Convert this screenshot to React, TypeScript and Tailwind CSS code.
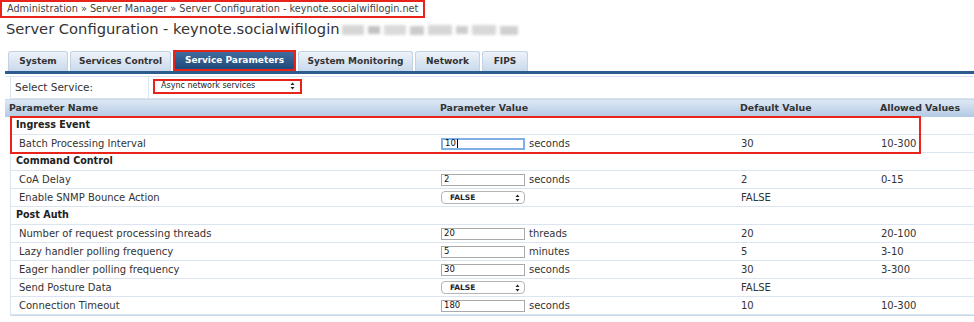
import React from 'react';

type Row =
  | { kind: 'group'; label: string }
  | { kind: 'input'; label: string; value: string; unit: string; def: string; allowed: string; focus?: boolean }
  | { kind: 'select'; label: string; value: string; def: string };

const tabs = [
  { label: 'System', w: 'w-[60px]' },
  { label: 'Services Control', w: 'w-[101px]' },
  { label: 'Service Parameters', w: 'w-[123px]' },
  { label: 'System Monitoring', w: 'w-[115px]' },
  { label: 'Network', w: 'w-[65px]' },
  { label: 'FIPS', w: 'w-[46px]' },
];

const ingress: Row[] = [
  { kind: 'group', label: 'Ingress Event' },
  { kind: 'input', label: 'Batch Processing Interval', value: '10', unit: 'seconds', def: '30', allowed: '10-300', focus: true },
];

const rest: Row[] = [
  { kind: 'group', label: 'Command Control' },
  { kind: 'input', label: 'CoA Delay', value: '2', unit: 'seconds', def: '2', allowed: '0-15' },
  { kind: 'select', label: 'Enable SNMP Bounce Action', value: 'FALSE', def: 'FALSE' },
  { kind: 'group', label: 'Post Auth' },
  { kind: 'input', label: 'Number of request processing threads', value: '20', unit: 'threads', def: '20', allowed: '20-100' },
  { kind: 'input', label: 'Lazy handler polling frequency', value: '5', unit: 'minutes', def: '5', allowed: '3-10' },
  { kind: 'input', label: 'Eager handler polling frequency', value: '30', unit: 'seconds', def: '30', allowed: '3-300' },
  { kind: 'select', label: 'Send Posture Data', value: 'FALSE', def: 'FALSE' },
  { kind: 'input', label: 'Connection Timeout', value: '180', unit: 'seconds', def: '10', allowed: '10-300' },
];

const Arrows = () => (
  <svg width="5" height="8" viewBox="0 0 5 8" className="shrink-0">
    <path d="M2.5 0.5 L4.5 3 L0.5 3 Z M2.5 7.5 L4.5 5 L0.5 5 Z" fill="#222" />
  </svg>
);

const ParamRow: React.FC<{ row: Row }> = ({ row }) => {
  if (row.kind === 'group') {
    return (
      <div className="flex h-[18px] items-center border-b border-[#dbe5f1] pl-[5px] text-[9.6px] font-bold text-[#222]">
        {row.label}
      </div>
    );
  }
  return (
    <div className="grid h-[18px] grid-cols-[430px_300px_140px_1fr] items-center border-b border-[#dbe5f1] text-[#333]">
      <div className="pl-[8px]">{row.label}</div>
      <div className="flex items-center">
        {row.kind === 'input' ? (
          <>
            <div
              className={`flex h-[12px] w-[84px] items-center px-[2px] text-[8.5px] leading-none text-[#111] ${
                row.focus ? 'border-2 border-[#7fb0e3]' : 'border border-[#a9a9a9] bg-white'
              }`}
            >
              {row.value}
              {row.focus && <span className="ml-px h-[9px] w-px bg-black" />}
            </div>
            <span className="ml-[4px]">{row.unit}</span>
          </>
        ) : (
          <div className="flex h-[13px] w-[84px] items-center justify-between rounded-[4px] border border-[#b5b5b5] bg-white pl-[8px] pr-[4px] text-[7.5px] font-bold leading-none text-[#222]">
            {row.value}
            <Arrows />
          </div>
        )}
      </div>
      <div>{row.def}</div>
      <div>{row.kind === 'input' ? row.allowed : ''}</div>
    </div>
  );
};

const App: React.FC = () => {
  return (
    <div className="h-[322px] w-[974px] overflow-hidden bg-white text-[10px] text-[#333]" style={{ fontFamily: '"DejaVu Sans", Verdana, sans-serif' }}>
      <div className="inline-block border-2 border-[#e8231a] py-[2px] pl-[5px] pr-[5px] text-[9.7px] leading-[10px] text-[#444]">
        Administration » Server Manager » Server Configuration - keynote.socialwifilogin.net
      </div>

      <div className="mt-px flex items-center pl-[6px] text-[14.7px] leading-[20px] text-[#333]">
        Server Configuration - keynote.socialwifilogin
        <div className="ml-[2px] mt-[2px] flex items-center gap-[4px] blur-[1.5px]">
          <span className="h-[10px] w-[22px] bg-[#d6d6d6]" />
          <span className="h-[8px] w-[12px] bg-[#c2c2c2]" />
          <span className="h-[10px] w-[22px] bg-[#dadada]" />
          <span className="h-[9px] w-[14px] bg-[#cbcbcb]" />
          <span className="h-[10px] w-[24px] bg-[#d6d6d6]" />
          <span className="h-[8px] w-[12px] bg-[#cdcdcd]" />
          <span className="h-[10px] w-[24px] bg-[#d8d8d8]" />
          <span className="h-[9px] w-[18px] bg-[#d0d0d0]" />
        </div>
      </div>

      <div className="ml-[5px] mt-[11px] flex items-end gap-[2px] border-b-[3px] border-[#2c5c8f] pl-[3px]">
        {tabs.map((t) => {
          const active = t.label === 'Service Parameters';
          return active ? (
            <div
              key={t.label}
              className={`flex h-[21px] ${t.w} items-center justify-center border-2 border-[#e8231a] bg-gradient-to-b from-[#3f6c9e] to-[#1f4a7b] text-[9px] font-bold text-white`}
            >
              {t.label}
            </div>
          ) : (
            <div
              key={t.label}
              className={`flex h-[20px] ${t.w} items-center justify-center rounded-t-[3px] border border-b-0 border-[#c3d1e2] bg-gradient-to-b from-[#eef3f9] to-[#c9d9ec] text-[9px] font-bold text-[#333]`}
            >
              {t.label}
            </div>
          );
        })}
      </div>

      <div className="ml-[5px] mt-[2px] border-t border-[#dbe5f1]">
        <div className="ml-[5px] flex h-[22px] border-b border-l border-[#dbe5f1]">
          <div className="flex w-[138px] items-center border-r border-[#dbe5f1] pl-[4px] text-[10.5px]">Select Service:</div>
          <div className="flex items-center pl-[4px]">
            <div className="mb-[3px] flex h-[15px] w-[149px] items-center justify-between border-2 border-[#e8231a] bg-white pl-[6px] pr-[5px] text-[8px] leading-none text-[#222]">
              Async network services
              <Arrows />
            </div>
          </div>
        </div>

        <div className="grid h-[18px] grid-cols-[435px_300px_140px_1fr] items-center border-t border-[#c9d8ea] bg-gradient-to-b from-[#dde8f4] to-[#b3cae4] text-[9.4px] font-bold text-[#333]">
          <div className="pl-[4px]">Parameter Name</div>
          <div>Parameter Value</div>
          <div>Default Value</div>
          <div>Allowed Values</div>
        </div>

        <div className="ml-[5px] border-l border-[#dbe5f1]">
          <div className="relative">
            {ingress.map((r) => (
              <ParamRow key={r.label} row={r} />
            ))}
            <div className="pointer-events-none absolute left-[-1px] top-[-1px] h-[38px] w-[911px] border-2 border-[#e8231a]" />
          </div>
          {rest.map((r) => (
            <ParamRow key={r.label} row={r} />
          ))}
          <div className="h-px bg-[#c9d8ea]" />
        </div>
      </div>
    </div>
  );
};

export default App;
